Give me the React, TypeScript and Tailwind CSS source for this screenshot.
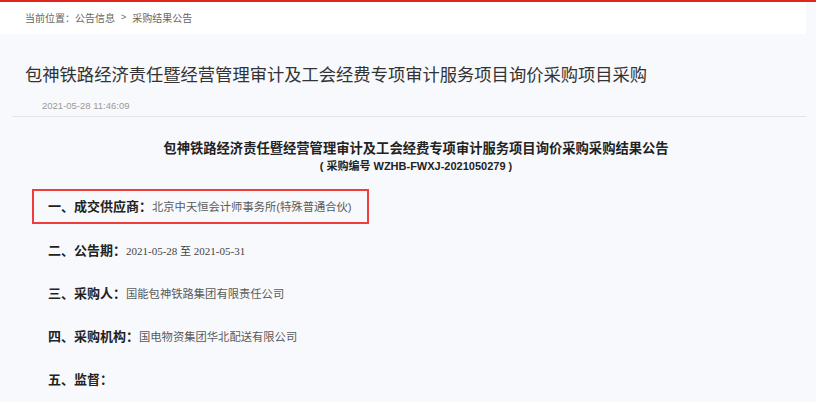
import React from "react";

type Item = { label: string; value: string; serif?: boolean };

const items: Item[] = [
  { label: "一、成交供应商：", value: "北京中天恒会计师事务所(特殊普通合伙)" },
  { label: "二、公告期：", value: "2021-05-28 至 2021-05-31", serif: true },
  { label: "三、采购人：", value: "国能包神铁路集团有限责任公司" },
  { label: "四、采购机构：", value: "国电物资集团华北配送有限公司" },
  { label: "五、监督：", value: "" },
];

const Row: React.FC<Item> = ({ label, value, serif }) => (
  <div className="flex items-center h-[20px] leading-[20px] whitespace-nowrap">
    <span className="text-[13px] font-bold text-[#222]">{label}</span>
    <span
      className={
        serif
          ? "text-[11px] text-[#444] font-['Liberation_Serif','Noto_Sans_CJK_SC',serif]"
          : "text-[11.3px] text-[#5a5a5a]"
      }
    >
      {value}
    </span>
  </div>
);

export default function App() {
  return (
    <div className="w-[816px] h-[402px] overflow-hidden bg-[#f8f9fc] font-['Liberation_Sans','Noto_Sans_CJK_SC',sans-serif]">
      <div className="h-[2px] bg-[#e0251f]" />
      <div className="w-[806px] h-[32px] bg-white flex items-center pl-[25px] text-[10px] text-[#666]">
        当前位置：公告信息<span className="mx-[6px] text-[9px]">&gt;</span>采购结果公告
      </div>

      <div className="w-[806px]">
        <h1 className="mt-[29px] pl-[25px] text-[17.3px] leading-[24px] text-[#333] font-normal">
          包神铁路经济责任暨经营管理审计及工会经费专项审计服务项目询价采购项目采购
        </h1>
        <div className="mt-[13px] pl-[42px] text-[9.5px] leading-[12px] text-[#999]">
          2021-05-28 11:46:09
        </div>
        <div className="mt-[4px] ml-[12px] h-px bg-[#e3e4e8]" />

        <div className="pl-[26px] text-center">
          <div className="mt-[23px] text-[13.3px] leading-[18px] font-bold text-[#222]">
            包神铁路经济责任暨经营管理审计及工会经费专项审计服务项目询价采购采购结果公告
          </div>
          <div className="text-[11px] leading-[16px] font-bold text-[#222]">
            ( 采购编号 WZHB-FWXJ-2021050279 )
          </div>
        </div>

        <div className="mt-[15px] ml-[32px] w-[337px] h-[35px] border-2 border-[#f03c3c] flex items-center pl-[14px]">
          <Row {...items[0]} />
        </div>

        <div className="pl-[48px] flex flex-col gap-[23px] mt-[17px]">
          {items.slice(1).map((it) => (
            <Row key={it.label} {...it} />
          ))}
        </div>
      </div>
    </div>
  );
}
